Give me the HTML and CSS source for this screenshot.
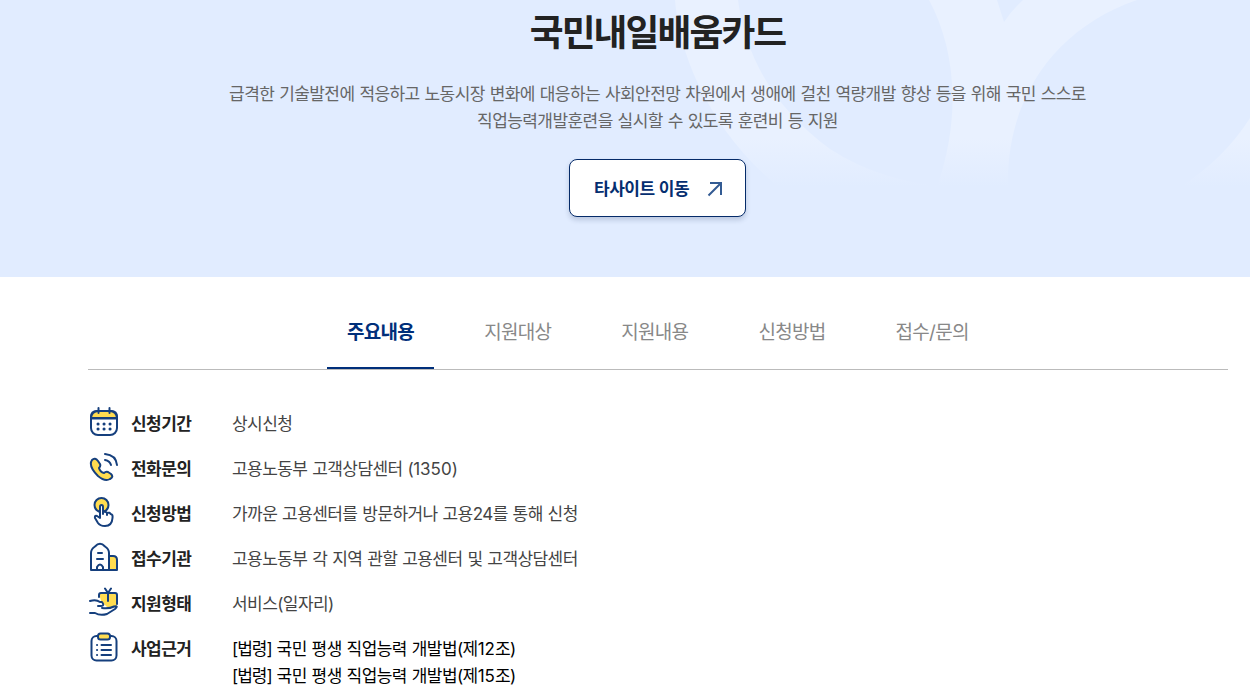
FILE: index.html
```html
<!DOCTYPE html>
<html lang="ko">
<head>
<meta charset="utf-8">
<title>국민내일배움카드</title>
<link rel="stylesheet" href="styles.css">
</head>
<body>
<header class="hero">
  <svg class="hero-art" width="1250" height="277" viewBox="0 0 1250 277" aria-hidden="true">
    <defs>
      <linearGradient id="fade" gradientUnits="userSpaceOnUse" x1="0" y1="138" x2="0" y2="187"><stop offset="0" stop-color="#e9f1ff"/><stop offset="1" stop-color="#e1ecff"/></linearGradient>
    </defs>
    <g fill="url(#fade)">
      <path d="M675 0C679 55 710 130 778 187H950Q881 182 830 149Q750 90 738 0Z"/>
      <path d="M929 0C955 48 962 115 937 187H1008C1006 95 1058 27 1137 0H1023Q1012 10 1004 22L997 0Z"/>
      <path d="M1250 118Q1224 159 1180 187H1250Z"/>
    </g>
  </svg>
  <div class="hero-body">
    <h1>국민내일배움카드</h1>
    <p>급격한 기술발전에 적응하고 노동시장 변화에 대응하는 사회안전망 차원에서 생애에 걸친 역량개발 향상 등을 위해 국민 스스로<br>직업능력개발훈련을 실시할 수 있도록 훈련비 등 지원</p>
    <a class="go"><span>타사이트 이동</span><svg width="16" height="16" viewBox="0 0 16 16" fill="none" stroke="#335b93" stroke-width="2"><path d="M1.500 14.500 14 2M3 2H14V14"/></svg></a>
  </div>
</header>
<main>
  <nav class="tabs"><a class="on">주요내용</a><a>지원대상</a><a>지원내용</a><a>신청방법</a><a>접수/문의</a></nav>
  <dl class="info">
    <div><dt><svg viewBox="0 0 30 30"><path class="y" d="M2 11V10Q2 4 8 4H22Q28 4 28 10V11Z"/><rect x="2" y="4" width="26" height="24" rx="7"/><path d="M2 11.500H28M9.500 1V6M20.500 1V6"/><path class="dots" d="M9 17H9.100M15 17H15.100M21 17H21.100M9 22H9.100M15 22H15.100M21 22H21.100"/></svg>신청기간</dt><dd>상시신청</dd></div>
    <div><dt><svg viewBox="0 0 30 30"><path class="y" d="M3 8Q6 5 9 9L11 12Q12 14 10 16Q11 20 15 21Q17 19 19 20L22 22Q25 25 21 27Q16 30 9 24Q-1 14 3 8Z"/><path d="M16 2Q27 3 28 13M16 8Q21 9 22 13"/></svg>전화문의</dt><dd>고용노동부 고객상담센터 (<span class="num">1350</span>)</dd></div>
    <div><dt><svg viewBox="0 0 30 30"><circle class="y" cx="12.500" cy="8" r="7"/><path class="w" d="M11 19V10Q11 8 12.500 8T14 10V15Q17 14 18 16Q21 15 21.500 17Q24 17 23.500 21Q23 29 16 29Q11 29 9 26L6 21Q5.500 18 8 19L11 21ZM14 15V17M18 16V18"/></svg>신청방법</dt><dd>가까운 고용센터를 방문하거나 고용24를 통해 신청</dd></div>
    <div><dt><svg viewBox="0 0 30 30"><path class="y" d="M20 14H24Q28 14 28 18V28H20Z"/><path class="w" d="M2 28V11Q2 7 6 4.500Q11 -1 16 4.500Q20 7 20 11V28Z"/><path d="M9 11H13M8 17H14M8 28V25Q11 20 14 25V28"/></svg>접수기관</dt><dd>고용노동부 각 지역 관할 고용센터 및 고객상담센터</dd></div>
    <div><dt><svg viewBox="0 0 30 30"><path class="yf" d="M10 6H28V20H18L12 14Z"/><path d="M10 10V8Q10 6 12 6H26Q28 6 28 8V17M19 6V14M16 1.500 19 6 22 1.500M1 14Q7 12 11 15H13Q16 19 12 19H9M13 21Q20 22 25 19.500Q30 18.500 26 22L18 27Q11 29 6 26H1"/></svg>지원형태</dt><dd>서비스(일자리)</dd></div>
    <div class="law"><dt><svg viewBox="0 0 30 30"><rect x="2.500" y="4" width="25" height="24.500" rx="5"/><rect class="y" x="9" y="1.500" width="12" height="6" rx="2.500"/><path d="M12.500 13H22M12.500 18H22M12.500 23H22M8 13H8.100M8 18H8.100M8 23H8.100"/></svg>사업근거</dt><dd><span class="br">[법령]</span> 국민 평생 직업능력 개발법(제<span class="num">12</span>조)<br><span class="br">[법령]</span> 국민 평생 직업능력 개발법(제<span class="num">15</span>조)</dd></div>
  </dl>
</main>
</body>
</html>
```

FILE: styles.css
```css
* { box-sizing: border-box; }
body { margin: 0; background: #fff; font: 17px/27px Inter, "Noto Sans CJK KR", sans-serif; letter-spacing: -0.57px; word-spacing: 0.67px; color: #444; height: 698px; overflow: hidden; }
h1, p, dl, dd { margin: 0; }
.hero { position: relative; height: 277px; background: #e1ecff; }
.hero-art { position: absolute; inset: 0; }
.hero-body { position: relative; display: flex; flex-direction: column; align-items: center; padding: 6px 0 0 65px; }
h1 { font-size: 36.8px; line-height: 54px; font-weight: 700; letter-spacing: -1.9px; color: #222; }
.hero p { margin-top: 21px; text-align: center; color: #666; white-space: nowrap; }
.go { display: flex; align-items: center; justify-content: space-between; margin-top: 24px; width: 177px; height: 58px; padding: 2px 22px 0 24px; background: #fff; border: 1px solid #052b69; border-radius: 8px; box-shadow: 0 3px 5px rgba(30,50,90,.2); color: #052e70; font-weight: 700; letter-spacing: -0.5px; }
main { padding: 0 22px 0 88px; }
.tabs { display: flex; gap: 30px; height: 93px; padding: 18px 0 0 239px; border-bottom: 1px solid #bbb; font-size: 19px; letter-spacing: -0.7px; color: #888; }
.tabs a { padding: 24px 20px 0; }
.tabs .on { color: #002f7a; font-weight: 700; border-bottom: 2px solid #002f7a; }
.info { display: grid; gap: 15px; padding-top: 39px; }
.info div { display: flex; height: 30px; }
.info .law { color: #000; }
dt { display: flex; gap: 12px; width: 144px; line-height: 30px; font-weight: 700; color: #222; }
dd { padding-top: 2px; }
dt svg { width: 30px; height: 30px; margin: -2px 0 0 1px; fill: none; stroke: #153f7d; stroke-width: 2; stroke-linecap: round; stroke-linejoin: round; }
.y { fill: #ffdc50; }
.yf { fill: #ffdc50; stroke: none; }
.w { fill: #fff; }
.dots { stroke-width: 3; }
.num { letter-spacing: 0; }
.br { letter-spacing: -1px; }
```
